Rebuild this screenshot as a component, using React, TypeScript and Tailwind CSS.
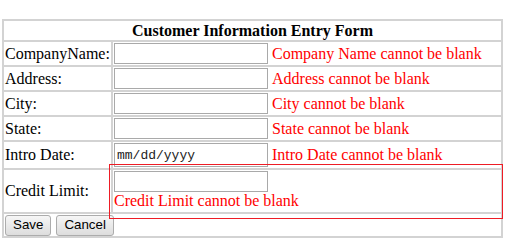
const fields = [
    { label: 'CompanyName:', error: 'Company Name cannot be blank' },
    { label: 'Address:', error: 'Address cannot be blank' },
    { label: 'City:', error: 'City cannot be blank' },
    { label: 'State:', error: 'State cannot be blank' },
];

const cell = 'border-2 border-[#d3d3d3] p-0 align-middle';
const input =
    'h-[21px] w-[154px] shrink-0 border border-[#a9a9a9] bg-white px-[2px] text-[13px] outline-none';
const button =
    'h-[21px] rounded-[3px] border border-[#acacac] bg-gradient-to-b from-[#f6f6f6] to-[#dddddd] px-[7px] leading-none';

export default function App() {
    return (
        <div className="min-h-[250px] w-[521px] bg-white pt-[19px] pl-[2px] font-['Liberation_Serif',serif] text-[16px] text-black">
            <div className="relative w-[501px]">
                <table className="w-[501px] table-fixed border-collapse border-2 border-[#d3d3d3]">
                    <colgroup>
                        <col className="w-[109px]" />
                        <col />
                    </colgroup>
                    <tbody>
                        <tr>
                            <th colSpan={2} className={cell}>
                                <div className="flex h-[19px] items-center justify-center font-bold">
                                    Customer Information Entry Form
                                </div>
                            </th>
                        </tr>
                        {fields.map((field) => (
                            <tr key={field.label}>
                                <td className={cell}>
                                    <div className="flex h-[23px] items-center px-px whitespace-nowrap">
                                        {field.label}
                                    </div>
                                </td>
                                <td className={cell}>
                                    <div className="flex h-[23px] items-center gap-[4px] px-px whitespace-nowrap">
                                        <input type="text" className={input} />
                                        <span className="text-[#ff0000]">{field.error}</span>
                                    </div>
                                </td>
                            </tr>
                        ))}
                        <tr>
                            <td className={cell}>
                                <div className="flex h-[26px] items-center px-px whitespace-nowrap">
                                    Intro Date:
                                </div>
                            </td>
                            <td className={cell}>
                                <div className="flex h-[26px] items-center gap-[4px] px-px whitespace-nowrap">
                                    <input
                                        type="text"
                                        placeholder="mm/dd/yyyy"
                                        className={`${input} h-[24px] font-['Liberation_Mono',monospace] placeholder:text-[#222]`}
                                    />
                                    <span className="text-[#ff0000]">
                                        Intro Date cannot be blank
                                    </span>
                                </div>
                            </td>
                        </tr>
                        <tr>
                            <td className={cell}>
                                <div className="flex h-[42px] items-center px-px whitespace-nowrap">
                                    Credit Limit:
                                </div>
                            </td>
                            <td className={cell}>
                                <div className="flex h-[42px] flex-col items-start px-px pt-px">
                                    <input type="text" className={input} />
                                    <div className="leading-[18px] text-[#ff0000]">
                                        Credit Limit cannot be blank
                                    </div>
                                </div>
                            </td>
                        </tr>
                        <tr>
                            <td colSpan={2} className={cell}>
                                <div className="flex h-[22px] items-center gap-[5px] px-px font-['Liberation_Sans',Arial,sans-serif] text-[13.33px]">
                                    <button className={button}>Save</button>
                                    <button className={button}>Cancel</button>
                                </div>
                            </td>
                        </tr>
                    </tbody>
                </table>
                <div className="pointer-events-none absolute top-[145px] left-[107px] h-[55px] w-[394px] border border-[#ee1c25]" />
            </div>
        </div>
    );
}
